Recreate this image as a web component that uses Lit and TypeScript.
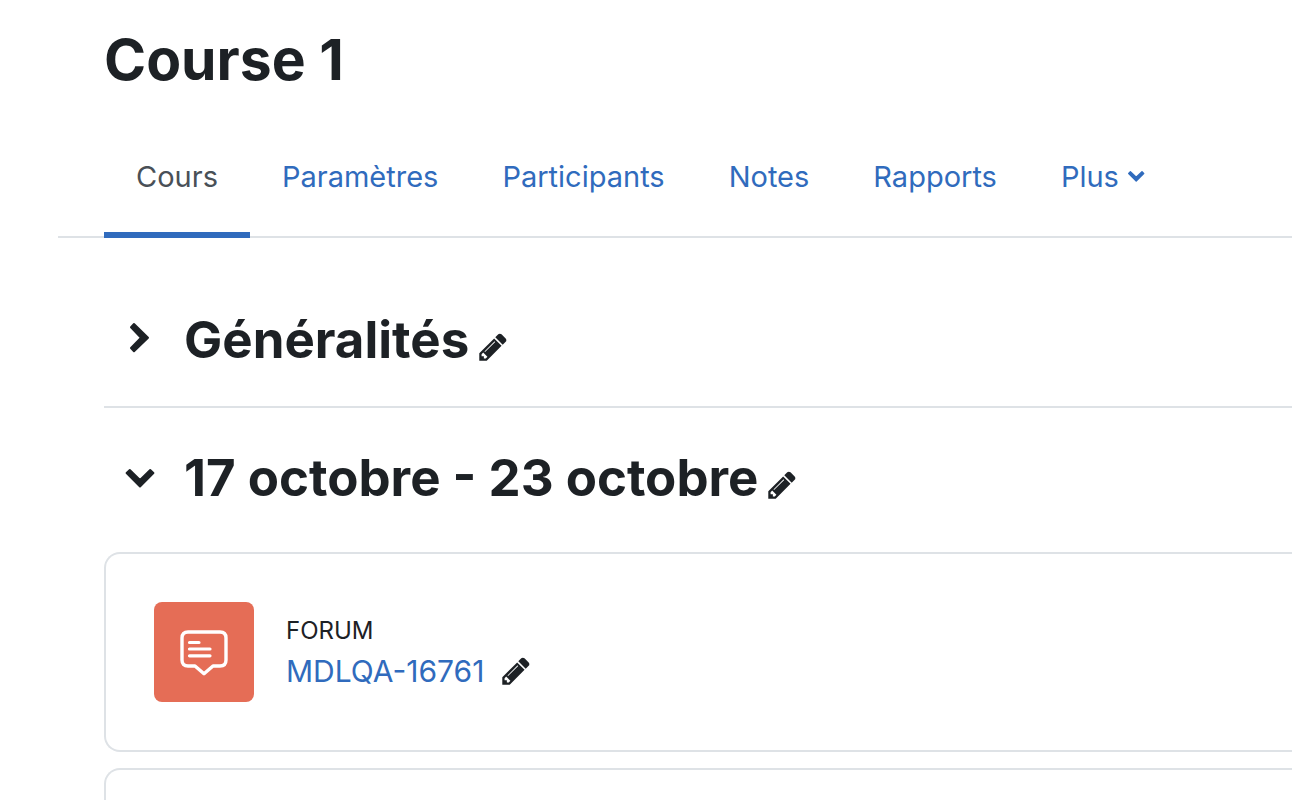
import { LitElement, html, css, svg } from "lit";
import { customElement } from "lit/decorators.js";

const pencil = svg`<path d="M491 1536l91-91-235-235-91 91v107h128v128h107zm523-928q0-22-22-22-10 0-17 7l-542 542q-7 7-7 17 0 22 22 22 10 0 17-7l542-542q7-7 7-17zm-54-192l416 416-832 832h-416v-416zm683 96q0 53-37 90l-166 166-416-416 166-165q36-38 90-38 53 0 91 38l235 234q37 39 37 91z"/>`;

const tabs = ["Paramètres", "Participants", "Notes", "Rapports"];

@customElement("app-root")
export class AppRoot extends LitElement {
  static styles = css`
    :host {
      display: block;
      height: 100vh;
      overflow: hidden;
      background: #fff;
      color: #1d2125;
      font-family: Inter, "Liberation Sans", sans-serif;
      font-size: 30px;
      line-height: 44px;
    }
    * { box-sizing: border-box; }
    a { color: #306bbd; text-decoration: none; }
    button {
      display: flex;
      align-items: center;
      justify-content: center;
      padding: 0;
      border: 0;
      background: none;
      color: inherit;
      font: inherit;
      cursor: pointer;
    }
    svg { display: block; fill: currentColor; }
    h1, h2, p { margin: 0; }
    h1 { padding: 24px 0 0 104px; font-size: 57px; line-height: 72px; }
    .tabs {
      display: flex;
      margin: 36px 0 0 58px;
      padding-left: 46px;
      border-bottom: 2px solid #dee2e6;
      font-size: 29px;
      white-space: nowrap;
    }
    .tab { display: flex; align-items: center; gap: 8px; height: 106px; margin-bottom: -2px; padding: 0 32px 16px; }
    .tab.active { padding-bottom: 10px; border-bottom: 6px solid #306bbd; color: #495057; }
    .content { margin-left: 104px; }
    .section { display: flex; align-items: center; white-space: nowrap; }
    .general { margin-top: 68px; padding-bottom: 32px; border-bottom: 2px solid #dee2e6; }
    .week { padding: 36px 0 40px; }
    .toggle { width: 72px; height: 68px; margin-right: 8px; }
    .toggle svg { stroke: currentColor; stroke-width: 2; stroke-linejoin: round; }
    h2 { font-size: 51px; line-height: 68px; }
    .edit { width: 32px; height: 32px; }
    .section .edit { margin: 14px 0 0 8px; }
    .cards { display: grid; gap: 16px; }
    .card {
      display: flex;
      align-items: center;
      gap: 32px;
      min-height: 200px;
      padding: 48px;
      border: 2px solid #dee2e6;
      border-right: 0;
      border-radius: 16px 0 0 16px;
    }
    .badge { display: grid; place-items: center; width: 100px; height: 100px; border-radius: 8px; background: #e56d56; }
    .info { padding-top: 2px; }
    .kind { font-size: 24px; line-height: 36px; }
    .name { display: flex; align-items: center; gap: 16px; }
  `;

  private edit(label: string) {
    return html`<button class="edit" aria-label=${label}>
      <svg width="32" height="32" viewBox="0 0 1792 1792">${pencil}</svg>
    </button>`;
  }

  render() {
    return html`
      <h1>Course 1</h1>
      <nav class="tabs">
        <a class="tab active" href="#" aria-current="page">Cours</a>
        ${tabs.map((t) => html`<a class="tab" href="#">${t}</a>`)}
        <a class="tab" href="#">Plus
          <svg width="18" height="14" viewBox="0 0 18 14"><path d="M3.400 1.800L9.200 7.300 15 1.800l1.700 1.800-7.500 7.400-7.500-7.400z" stroke="currentColor" stroke-width="1.400" stroke-linejoin="round"/></svg>
        </a>
      </nav>
      <main class="content">
        <section class="section general">
          <button class="toggle" aria-label="Déplier" aria-expanded="false">
            <svg width="40" height="40" viewBox="0 0 40 40"><path d="M14 4l14 13.7L14 31.200l-3-3.200 10-10.300L11 7.200z"/></svg>
          </button>
          <h2>Généralités</h2>
          ${this.edit("Modifier Généralités")}
        </section>
        <section class="section week">
          <button class="toggle" aria-label="Replier" aria-expanded="true">
            <svg width="40" height="40" viewBox="0 0 40 40"><path d="M9.800 12L20 22l10.200-10 3.200 3L20 28.500 6.600 15z"/></svg>
          </button>
          <h2>17 octobre - 23 octobre</h2>
          ${this.edit("Modifier la section")}
        </section>
        <div class="cards">
          <article class="card">
            <div class="badge">
              <svg width="50" height="50" viewBox="0 0 50 50" fill="none" stroke="#fff" stroke-width="3.4" stroke-linecap="round" stroke-linejoin="round">
                <path fill="none" d="M9 5h32q6 0 6 6v22q0 6-6 6h-7L25 46.700 16 39H9q-6 0-6-6V11q0-6 6-6z"/>
                <path d="M10.500 15.500h9.500M10.500 22h20.500M10.500 28.800h20.500" stroke-width="3.2"/>
              </svg>
            </div>
            <div class="info">
              <p class="kind">FORUM</p>
              <div class="name"><a href="#">MDLQA-16761</a>${this.edit("Modifier MDLQA-16761")}</div>
            </div>
          </article>
          <article class="card"></article>
        </div>
      </main>
    `;
  }
}
